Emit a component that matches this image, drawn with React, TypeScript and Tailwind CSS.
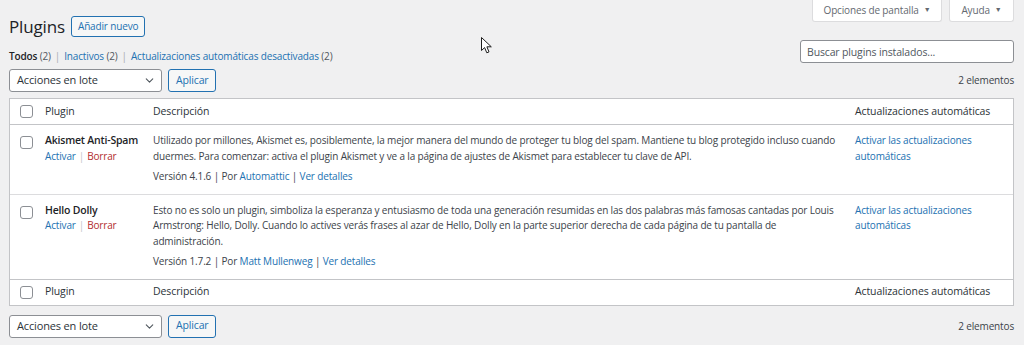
import { ChevronDown } from 'lucide-react';

const rows = [
  {
    name: 'Akismet Anti-Spam',
    desc: 'Utilizado por millones, Akismet es, posiblemente, la mejor manera del mundo de proteger tu blog del spam. Mantiene tu blog protegido incluso cuando duermes. Para comenzar: activa el plugin Akismet y ve a la página de ajustes de Akismet para establecer tu clave de API.',
    version: '4.1.6',
    author: 'Automattic',
  },
  {
    name: 'Hello Dolly',
    desc: 'Esto no es solo un plugin, simboliza la esperanza y entusiasmo de toda una generación resumidas en las dos palabras más famosas cantadas por Louis Armstrong: Hello, Dolly. Cuando lo actives verás frases al azar de Hello, Dolly en la parte superior derecha de cada página de tu pantalla de administración.',
    version: '1.7.2',
    author: 'Matt Mullenweg',
  },
];

function Checkbox() {
  return <span className="block w-[13px] h-[13px] rounded-[3px] border border-[#8c8f94] bg-white" />;
}

function BulkBar({ className = '' }: { className?: string }) {
  return (
    <div className={`flex items-center justify-between ${className}`}>
      <div className="flex items-center gap-[6px]">
        <div className="w-[153px] h-[23px] flex items-center justify-between pl-[7px] pr-[5px] bg-white border border-[#8c8f94] rounded-[3px] text-[11px] text-[#2c3338]">
          <span>Acciones en lote</span>
          <ChevronDown className="w-[13px] h-[13px] text-[#50575e]" strokeWidth={2} />
        </div>
        <button className="h-[23px] px-[7px] border border-[#2271b1] rounded-[3px] bg-[#f6f7f7] text-[10.5px] text-[#2271b1]">
          Aplicar
        </button>
      </div>
      <span className="text-[#3c434a]">2 elementos</span>
    </div>
  );
}

function HeadRow({ top }: { top?: boolean }) {
  return (
    <div
      className={`grid grid-cols-[27px_108px_1fr_166px] h-[26px] items-center text-[10.5px] tracking-[-0.1px] text-[#2c3338] ${
        top ? 'border-b border-[#c3c4c7]' : 'border-t border-[#c3c4c7]'
      }`}
    >
      <div className="pl-[10px]">
        <Checkbox />
      </div>
      <div className="pl-[8px]">Plugin</div>
      <div className="pl-[8px]">Descripción</div>
      <div className="pl-[8px]">Actualizaciones automáticas</div>
    </div>
  );
}

export default function App() {
  return (
    <div className="relative w-[1024px] h-[345px] overflow-hidden bg-[#f0f0f1] font-['Open_Sans','Noto_Sans',sans-serif] text-[10px] tracking-[-0.15px] text-[#3c434a]">
      {/* screen options tabs */}
      <div className="absolute top-0 right-[10px] flex gap-[7px]">
        <div className="h-[22px] w-[130px] flex items-center justify-center gap-[5px] bg-white border border-t-0 border-[#dcdcde] rounded-b-[3px] text-[#646970]">
          Opciones de pantalla <span className="text-[7px]">▼</span>
        </div>
        <div className="h-[22px] w-[65px] flex items-center justify-center gap-[5px] bg-white border border-t-0 border-[#dcdcde] rounded-b-[3px] text-[#646970]">
          Ayuda <span className="text-[7px]">▼</span>
        </div>
      </div>

      <div className="pl-[9px] pr-[10px]">
        {/* heading */}
        <div className="flex items-center gap-[6px] h-[21px] mt-[16px]">
          <h1 className="text-[17px] leading-none text-[#1d2327]">Plugins</h1>
          <button className="h-[21px] px-[6px] border border-[#2271b1] rounded-[3px] bg-[#f6f7f7] text-[10px] text-[#2271b1]">
            Añadir nuevo
          </button>
        </div>

        {/* filters + search */}
        <div className="flex items-start justify-between mt-[3px] h-[23px]">
          <div className="mt-[8px] leading-[16px] text-[#50575e]">
            <span className="font-semibold text-[#1d2327]">Todos</span> (2)
            <span className="text-[#a7aaad] px-[4px]">|</span>
            <span className="text-[#2271b1]">Inactivos</span> (2)
            <span className="text-[#a7aaad] px-[4px]">|</span>
            <span className="text-[#2271b1]">Actualizaciones automáticas desactivadas</span> (2)
          </div>
          <input
            placeholder="Buscar plugins instalados..."
            className="w-[214px] h-[23px] px-[6px] bg-white border border-[#8c8f94] rounded-[3px] text-[10.5px] placeholder:text-[#50575e] outline-none"
          />
        </div>

        <BulkBar className="mt-[6px]" />

        {/* plugins table */}
        <div className="mt-[6px] bg-white border border-[#c3c4c7]">
          <HeadRow top />
          {rows.map((r, i) => (
            <div
              key={r.name}
              className={`grid grid-cols-[27px_108px_1fr_166px] pb-[9px] leading-[15.5px] ${
                i > 0 ? 'border-t border-[#dcdcde]' : ''
              }`}
            >
              <div className="pl-[10px] pt-[11px]">
                <Checkbox />
              </div>
              <div className="pl-[8px] pt-[8px]">
                <div className="font-semibold text-[10.5px] tracking-[-0.2px] text-[#1d2327] whitespace-nowrap">{r.name}</div>
                <div>
                  <span className="text-[#2271b1]">Activar</span>
                  <span className="text-[#c3c4c7] px-[3px]">|</span>
                  <span className="text-[#b32d2e]">Borrar</span>
                </div>
              </div>
              <div className="pl-[8px] pr-[8px] pt-[8px]">
                <p>{r.desc}</p>
                <p className="mt-[5px]">
                  Versión {r.version} | Por <span className="text-[#2271b1]">{r.author}</span> |{' '}
                  <span className="text-[#2271b1]">Ver detalles</span>
                </p>
              </div>
              <div className="pl-[8px] pr-[8px] pt-[8px] text-[#2271b1]">
                Activar las actualizaciones automáticas
              </div>
            </div>
          ))}
          <HeadRow />
        </div>

        <BulkBar className="mt-[9px]" />
      </div>

      {/* mouse pointer */}
      <svg className="absolute left-[481px] top-[37px]" width="12" height="18" viewBox="0 0 12 18">
        <path
          d="M0.5 0.5 L0.5 13.5 L3.6 10.6 L5.8 15.8 L8 14.9 L5.9 9.8 L10.3 9.8 Z"
          fill="#fff"
          stroke="#1d1d1d"
          strokeWidth="1"
          strokeLinejoin="round"
        />
      </svg>
    </div>
  );
}
